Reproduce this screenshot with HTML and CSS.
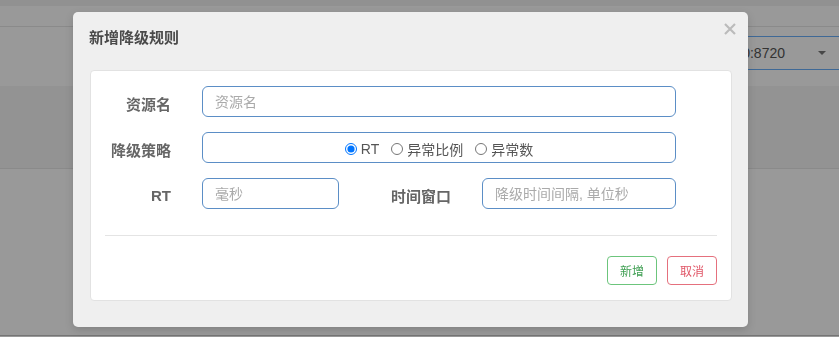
FILE: index.html
```html
<!DOCTYPE html>
<html lang="zh-CN">
<head>
  <meta charset="UTF-8" />
  <meta name="viewport" content="width=device-width, initial-scale=1.0" />
  <title>新增降级规则</title>
  <link rel="stylesheet" href="styles.css">
</head>
<body>
  <div class="page">
    <div class="topbar"></div>
    <div class="nav"></div>
    <div class="toolbar">
      <div class="machine-select">
        <span class="machine-text">172.16.0.10:8720</span>
        <span class="caret"></span>
      </div>
    </div>
    <div class="table-head"></div>
    <div class="table-body"></div>
  </div>

  <div class="backdrop"></div>

  <div class="modal">
    <span class="close">
      <svg width="12" height="12" viewBox="0 0 12 12"><path d="M1 1 L11 11 M11 1 L1 11" stroke="#bbbbbb" stroke-width="2.2" stroke-linecap="butt"/></svg>
    </span>
    <h3 class="modal-title">新增降级规则</h3>

    <div class="panel">
      <form class="rule-form">
        <div class="form-row">
          <label class="form-label">资源名</label>
          <input class="form-input" type="text" placeholder="资源名">
        </div>
        <div class="form-row">
          <label class="form-label">降级策略</label>
          <div class="radio-box">
            <label class="radio"><input type="radio" name="grade" checked>RT</label>
            <label class="radio"><input type="radio" name="grade">异常比例</label>
            <label class="radio"><input type="radio" name="grade">异常数</label>
          </div>
        </div>
        <div class="form-row">
          <label class="form-label">RT</label>
          <input class="form-input input-short" type="text" placeholder="毫秒">
          <label class="form-label label-wide">时间窗口</label>
          <input class="form-input" type="text" placeholder="降级时间间隔, 单位秒">
        </div>
      </form>

      <div class="divider"></div>

      <div class="actions">
        <button class="btn btn-add">新增</button>
        <button class="btn btn-cancel">取消</button>
      </div>
    </div>
  </div>
</body>
</html>
```

FILE: styles.css
```css
* {
  margin: 0;
  padding: 0;
  box-sizing: border-box;
}

body {
  font-family: "Liberation Sans", "Noto Sans CJK SC", sans-serif;
  background-color: #fff;
  color: #333;
  overflow: hidden;
}

/* page behind the dialog */
.topbar {
  height: 6px;
  background-color: #f2f2f2;
}

.nav {
  height: 21px;
  border-bottom: 1px solid #e6e6e6;
}

.toolbar {
  height: 59px;
  display: flex;
  justify-content: flex-end;
  padding-top: 9px;
}

.machine-select {
  width: 200px;
  height: 34px;
  margin-right: -6px;
  border: 1px solid #6ab0fa;
  border-radius: 4px;
  display: flex;
  align-items: center;
  justify-content: space-between;
  padding: 0 18px 0 30px;
  font-size: 14px;
  color: #555;
}

.caret {
  width: 0;
  height: 0;
  border-left: 4px solid transparent;
  border-right: 4px solid transparent;
  border-top: 4px solid #777;
}

.table-head {
  height: 83px;
  background-color: #f6f6f6;
  border-bottom: 1px solid #e6e6e6;
}

.table-body {
  height: 167px;
  border-bottom: 1px solid #c4c4c4;
}

.backdrop {
  position: fixed;
  inset: 0;
  background-color: rgba(0, 0, 0, 0.4);
}

/* dialog */
.modal {
  position: absolute;
  left: 73px;
  top: 12px;
  width: 675px;
  background-color: #efefef;
  border-radius: 5px;
  padding: 16px 16px 26px 17px;
  box-shadow: 0 3px 9px rgba(0, 0, 0, 0.15);
}

.close {
  position: absolute;
  top: 11px;
  right: 12px;
  line-height: 0;
}

.modal-title {
  font-size: 15px;
  font-weight: 700;
  line-height: 20px;
  color: #4a4a4a;
  margin-left: -1px;
  margin-bottom: 22px;
}

.panel {
  background-color: #fff;
  border: 1px solid #e2e2e2;
  border-radius: 4px;
  padding: 15px 14px;
}

.rule-form {
  margin-right: 41px;
}

.form-row {
  display: flex;
  align-items: center;
  margin-bottom: 15px;
}

.form-row:last-child {
  margin-bottom: 0;
}

.form-label {
  width: 66px;
  flex-shrink: 0;
  margin-right: 31px;
  padding-top: 4px;
  text-align: right;
  font-size: 15px;
  font-weight: 700;
  color: #666;
}

.label-wide {
  width: 112px;
}

.form-input {
  flex: 1;
  min-width: 0;
  height: 31px;
  border: 1px solid #5b8ec6;
  border-radius: 6px;
  padding: 0 12px;
  font-family: inherit;
  font-size: 14px;
  color: #333;
  outline: none;
}

.form-input::placeholder {
  color: #aaa;
}

.input-short {
  flex: 0 0 137px;
}

.radio-box {
  flex: 1;
  height: 31px;
  border: 1px solid #5b8ec6;
  border-radius: 6px;
  display: flex;
  align-items: center;
  justify-content: center;
  gap: 12px;
  padding-top: 2px;
}

.radio {
  display: flex;
  align-items: center;
  gap: 4px;
  font-size: 14px;
  color: #555;
}

.radio input {
  margin: 0;
  width: 12px;
  height: 12px;
}

.divider {
  height: 1px;
  background-color: #e4e4e4;
  margin: 26px 0 20px;
}

.actions {
  display: flex;
  justify-content: flex-end;
  gap: 10px;
}

.btn {
  height: 29px;
  padding: 0 12px;
  background-color: #fff;
  border-radius: 4px;
  font-family: inherit;
  font-size: 12px;
  cursor: pointer;
}

.btn-add {
  border: 1px solid #6cc57c;
  color: #3f9f52;
}

.btn-cancel {
  width: 50px;
  border: 1px solid #e5707d;
  color: #e05566;
}
```
